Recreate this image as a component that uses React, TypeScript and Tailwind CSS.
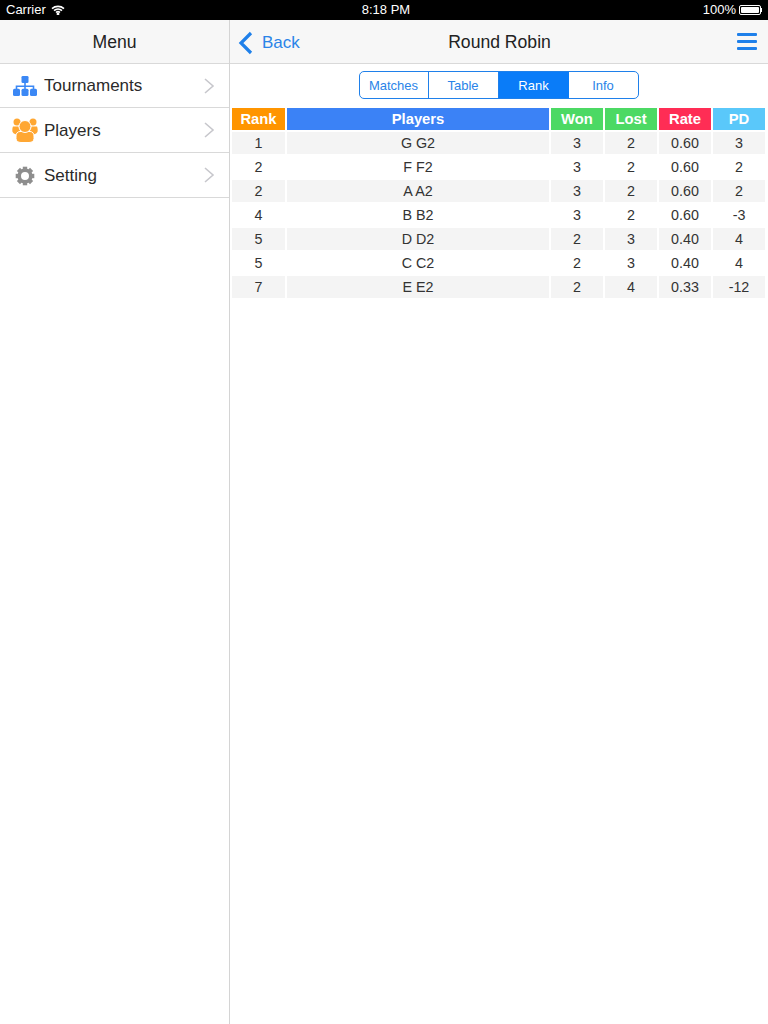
import React from "react";

function SitemapIcon() {
  return (
    <svg width="24" height="20" viewBox="0 0 24 20" fill="#3b88f5">
      <rect x="8.500" y="0" width="7" height="7" rx="1.300" />
      <path d="M11.200 6.500h1.600v3h8.500V13h-1.600v-2h-6.900v2h-1.600v-2H4.300v2H2.700V9.500h8.500z" />
      <rect x="0" y="12.700" width="7" height="7.300" rx="1.500" />
      <rect x="8.500" y="12.700" width="7" height="7.300" rx="1.500" />
      <rect x="17" y="12.700" width="7" height="7.300" rx="1.500" />
    </svg>
  );
}

function UsersIcon() {
  return (
    <svg width="26" height="25" viewBox="0 0 26 25" fill="#ffa733">
      <circle cx="5" cy="4" r="3.500" />
      <circle cx="21" cy="4" r="3.500" />
      <path d="M1 8.500h5.500l2 5.500-4 2.500C2.500 16 .8 15 .4 13.500.2 11.500.4 9.800 1 8.500z" />
      <path d="M25 8.500h-5.500l-2 5.500 4 2.500c2-.5 3.700-1.500 4.100-3 .2-2 0-3.700-.6-5z" />
      <path
        d="M8 13.500h10c2.500 0 4 2 4 4.500v2.500c0 2.500-2 4-5 4H9c-3 0-5-1.500-5-4V18c0-2.500 1.500-4.500 4-4.500z"
        stroke="white"
        strokeWidth="1"
      />
      <circle cx="13" cy="8.500" r="6" stroke="white" strokeWidth="1" />
    </svg>
  );
}

function GearIcon() {
  return (
    <svg width="20" height="20" viewBox="0 0 20 20">
      <circle cx="10" cy="10" r="5.800" fill="none" stroke="#8e8e8e" strokeWidth="3.600" />
      {[0, 45, 90, 135, 180, 225, 270, 315].map((a) => (
        <rect key={a} x="7.800" y="0.700" width="4.400" height="3.500" fill="#8e8e8e" transform={`rotate(${a} 10 10)`} />
      ))}
    </svg>
  );
}

const menu = [
  { label: "Tournaments", icon: <SitemapIcon />, h: "h-[44px]", pt: "" },
  { label: "Players", icon: <UsersIcon />, h: "h-[45px]", pt: "pt-[1px]" },
  { label: "Setting", icon: <GearIcon />, h: "h-[45px]", pt: "pt-[1px]" },
];

const rows = [
  ["1", "G G2", "3", "2", "0.60", "3"],
  ["2", "F F2", "3", "2", "0.60", "2"],
  ["2", "A A2", "3", "2", "0.60", "2"],
  ["4", "B B2", "3", "2", "0.60", "-3"],
  ["5", "D D2", "2", "3", "0.40", "4"],
  ["5", "C C2", "2", "3", "0.40", "4"],
  ["7", "E E2", "2", "4", "0.33", "-12"],
];

const headers = [
  { t: "Rank", c: "bg-[#ff9500]" },
  { t: "Players", c: "bg-[#3b82f6]" },
  { t: "Won", c: "bg-[#4cd964]" },
  { t: "Lost", c: "bg-[#4cd964]" },
  { t: "Rate", c: "bg-[#ff2d55]" },
  { t: "PD", c: "bg-[#5ac8fa]" },
];

const gridCols = "grid grid-cols-[53px_262px_52px_52px_52px_52px] gap-x-[2px]";
const tabs = [
  { t: "Matches", w: "w-[69px] border-r border-[#1f80ea]" },
  { t: "Table", w: "w-[70px] border-r border-[#1f80ea]" },
  { t: "Rank", w: "w-[70px]" },
  { t: "Info", w: "flex-1" },
];

function Chevron() {
  return (
    <svg width="12" height="18" viewBox="0 0 12 18" fill="none" className="stroke-[#c7c7cc]">
      <path d="M2 2l8 7-8 7" strokeWidth="1.600" />
    </svg>
  );
}

export default function App() {
  return (
    <div className="flex h-[1024px] w-[768px] flex-col overflow-hidden bg-white font-['Liberation_Sans',Arial,sans-serif] text-[#222]">
      <div className="grid h-[20px] shrink-0 grid-cols-3 items-center bg-black px-[6px] text-[13px] text-white">
        <div className="flex items-center gap-[5px]">
          <span>Carrier</span>
          <svg width="14" height="10" viewBox="0 0 14 10" fill="none" stroke="white" strokeWidth="1.600">
            <path d="M1 3.600C4.400.6 9.600.6 13 3.600" />
            <path d="M3 5.600c2.300-2 5.700-2 8 0" />
            <path d="M5 7.500c1.200-1 2.800-1 4 0" />
            <circle cx="7" cy="9" r=".6" fill="white" />
          </svg>
        </div>
        <div className="pl-[4px] text-center">8:18 PM</div>
        <div className="flex items-center justify-end gap-[3px]">
          <span>100%</span>
          <div className="flex items-center">
            <div className="h-[10px] w-[22px] rounded-[2px] border border-white p-[1px]">
              <div className="h-full w-full rounded-[1px] bg-white" />
            </div>
            <div className="h-[4px] w-[1px] bg-white" />
          </div>
        </div>
      </div>

      <div className="flex min-h-0 flex-1">
        <aside className="flex w-[230px] shrink-0 flex-col border-r border-[#d4d4d4]">
          <div className="flex h-[44px] shrink-0 items-center justify-center border-b border-[#d9d9d9] bg-[#f7f7f7] pt-[2px] text-[17.6px]">
            <span>Menu</span>
          </div>
          {menu.map((m) => (
            <div key={m.label} className={`flex ${m.h} items-center border-b border-[#d9d9d9] pl-[12px] pr-[14px]`}>
              <div className={`flex w-[26px] justify-center ${m.pt}`}>{m.icon}</div>
              <span className={`ml-[6px] flex-1 text-[17px] text-[#2a2a2a] ${m.pt}`}>{m.label}</span>
              <Chevron />
            </div>
          ))}
        </aside>

        <main className="flex min-w-0 flex-1 flex-col">
          <div className="flex h-[44px] shrink-0 items-center justify-between border-b border-[#d9d9d9] bg-[#f7f7f7] pl-[8px] pr-[11px] pt-[2px]">
            <div className="flex w-[100px] items-center gap-[9px] text-[17px] text-[#2a84e8]">
              <svg width="15" height="24" viewBox="0 0 15 24" fill="none" stroke="#1f80ea" strokeWidth="3.200">
                <path d="M13 2L3 12l10 10" />
              </svg>
              <span>Back</span>
            </div>
            <div className="ml-[4px] text-[17.6px]">Round Robin</div>
            <div className="flex w-[100px] flex-col items-end gap-[4px] pb-[2px]">
              <div className="h-[3px] w-[20px] rounded-[1px] bg-[#1f80ea]" />
              <div className="h-[3px] w-[20px] rounded-[1px] bg-[#1f80ea]" />
              <div className="h-[3px] w-[20px] rounded-[1px] bg-[#1f80ea]" />
            </div>
          </div>

          <div className="flex justify-center pt-[7px] pb-[9px] pr-[1px]">
            <div className="flex h-[28px] w-[280px] overflow-hidden rounded-[5px] border border-[#1f80ea] text-[13px]">
              {tabs.map(({ t, w }) => (
                <div
                  key={t}
                  className={`flex items-center justify-center pt-[1px] ${w} ${t === "Rank" ? "bg-[#0a7cf8] text-white" : "text-[#2a84e8]"}`}
                >
                  {t}
                </div>
              ))}
            </div>
          </div>

          <div className="flex flex-col gap-y-[2px] pl-[2px]">
            <div className={gridCols}>
              {headers.map((h) => (
                <div key={h.t} className={`flex h-[22px] items-center justify-center text-[14.800px] font-bold text-white ${h.c}`}>
                  {h.t}
                </div>
              ))}
            </div>
            {rows.map((r, i) => (
              <div key={i} className={gridCols}>
                {r.map((v, j) => (
                  <div key={j} className={`flex h-[22px] items-center justify-center pt-[1px] text-[14.300px] text-[#333] ${i % 2 === 0 ? "bg-[#f4f4f4]" : "bg-white"}`}>
                    {v}
                  </div>
                ))}
              </div>
            ))}
          </div>
        </main>
      </div>
    </div>
  );
}
